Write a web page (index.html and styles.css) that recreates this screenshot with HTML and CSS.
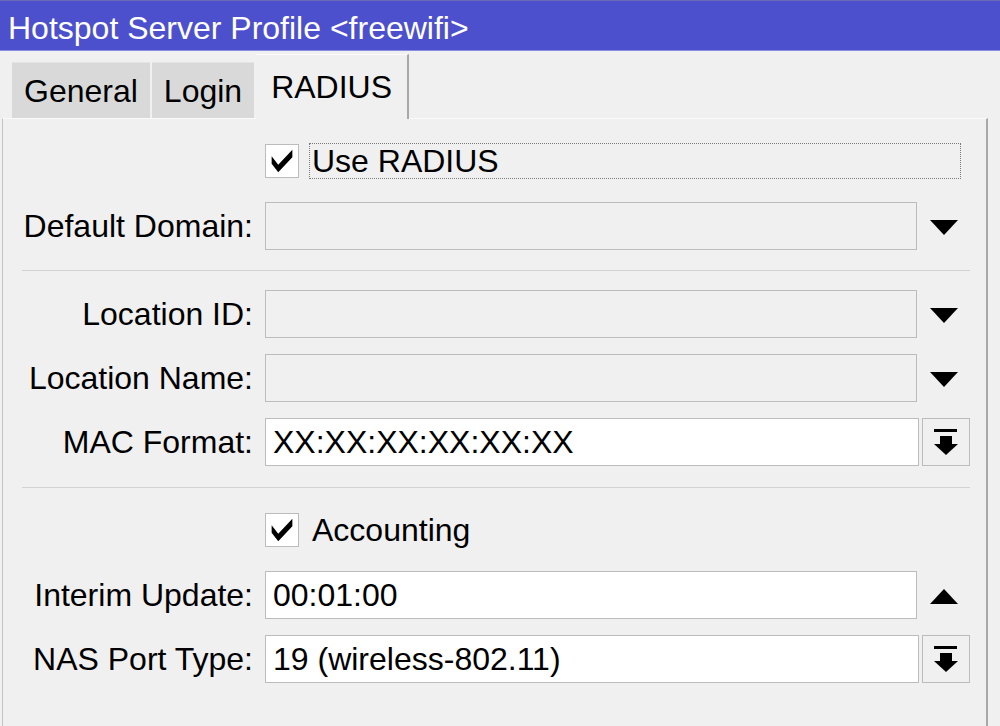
FILE: index.html
```html
<!DOCTYPE html>
<html>
<head>
<meta charset="utf-8">
<link rel="stylesheet" href="styles.css">
</head>
<body>
<div class="titlebar">Hotspot Server Profile &lt;freewifi&gt;</div>
<div class="tabs">
  <div class="tab">General</div>
  <div class="tab">Login</div>
  <div class="tab active">RADIUS</div>
</div>
<div class="panel">
  <div class="checkrow first">
    <span class="box"><svg width="34" height="34" viewBox="0 0 34 34"><polygon points="6,12 6,20 13,29 28,13 28,5 13,21" fill="#000"/></svg></span>
    <span class="checklabel focus">Use RADIUS</span>
  </div>

  <div class="row gap23">
    <label class="lbl">Default Domain:</label>
    <div class="field disabled"></div>
    <div class="ctl"><svg width="28" height="15" viewBox="0 0 28 15"><polygon points="0,0 28,0 14,15" fill="#000"/></svg></div>
  </div>

  <div class="sep top20"></div>

  <div class="row gap19">
    <label class="lbl">Location ID:</label>
    <div class="field disabled"></div>
    <div class="ctl"><svg width="28" height="15" viewBox="0 0 28 15"><polygon points="0,0 28,0 14,15" fill="#000"/></svg></div>
  </div>

  <div class="row">
    <label class="lbl">Location Name:</label>
    <div class="field disabled"></div>
    <div class="ctl"><svg width="28" height="15" viewBox="0 0 28 15"><polygon points="0,0 28,0 14,15" fill="#000"/></svg></div>
  </div>

  <div class="row">
    <label class="lbl">MAC Format:</label>
    <div class="field wide">XX:XX:XX:XX:XX:XX</div>
    <div class="btn"><svg width="46" height="46" viewBox="0 0 46 46"><rect x="11" y="10" width="23" height="3" fill="#000"/><rect x="17" y="17" width="12" height="8" fill="#000"/><polygon points="11,25 35,25 23,36" fill="#000"/></svg></div>
  </div>

  <div class="sep top21"></div>

  <div class="checkrow gap25">
    <span class="box"><svg width="34" height="34" viewBox="0 0 34 34"><polygon points="6,12 6,20 13,29 28,13 28,5 13,21" fill="#000"/></svg></span>
    <span class="checklabel">Accounting</span>
  </div>

  <div class="row gap23">
    <label class="lbl">Interim Update:</label>
    <div class="field">00:01:00</div>
    <div class="ctl"><svg width="28" height="15" viewBox="0 0 28 15"><polygon points="0,15 28,15 14,0" fill="#000"/></svg></div>
  </div>

  <div class="row">
    <label class="lbl">NAS Port Type:</label>
    <div class="field wide">19 (wireless-802.11)</div>
    <div class="btn"><svg width="46" height="46" viewBox="0 0 46 46"><rect x="11" y="10" width="23" height="3" fill="#000"/><rect x="17" y="17" width="12" height="8" fill="#000"/><polygon points="11,25 35,25 23,36" fill="#000"/></svg></div>
  </div>
</div>
</body>
</html>
```
FILE: styles.css
```css
html, body {
  margin: 0;
  padding: 0;
  height: 100%;
  overflow: hidden;
}
body {
  background: #f0f0f0;
  font-family: "Liberation Sans", Arial, sans-serif;
  font-size: 32px;
  color: #000;
}
.titlebar {
  height: 51px;
  box-sizing: border-box;
  border-top: 1px solid #6a6ab4;
  border-bottom: 1px solid #8a8ce4;
  background: #4d50cc;
  color: #fff;
  padding-left: 8px;
  padding-top: 4px;
  line-height: 46px;
}
.tabs {
  display: flex;
  align-items: flex-end;
  padding-left: 12px;
  margin-top: 2px;
  height: 65px;
}
.tab {
  height: 56px;
  box-sizing: border-box;
  background: #d9d9d9;
  padding: 0 12px 0 12px;
  line-height: 56px;
  margin-right: 2px;
  border-top: 1px solid #e4e4e4;
}
.tab.active {
  height: 65px;
  background: #f0f0f0;
  padding: 0 15px 0 15px;
  line-height: 64px;
  margin-right: 0;
  border-top: 1px solid #fafafa;
  border-right: 2px solid #a8a8a8;
  position: relative;
  top: 1px;
}
.panel {
  margin-left: 2px;
  width: 986px;
  box-sizing: border-box;
  height: 620px;
  border-top: 1px solid #fbfbfb;
  border-left: 1px solid #c4c4c4;
  border-right: 2px solid #a8a8a8;
  padding-top: 24px;
  padding-left: 1px;
}
.row {
  display: flex;
  align-items: center;
  height: 48px;
  margin-top: 16px;
}
.row.gap23 { margin-top: 23px; }
.row.gap19 { margin-top: 19px; }
.lbl {
  width: 249px;
  text-align: right;
  flex: none;
  margin-right: 12px;
}
.field {
  width: 652px;
  height: 48px;
  box-sizing: border-box;
  border: 1px solid #bcbcbc;
  background: #fff;
  padding-left: 7px;
  line-height: 46px;
  flex: none;
  white-space: nowrap;
}
.field.disabled {
  background: #f0f0f0;
}
.field.wide {
  width: 654px;
}
.ctl {
  width: 53px;
  display: flex;
  justify-content: center;
  align-items: center;
  padding-top: 2px;
  flex: none;
}
.ctl svg { display: block; }
.btn {
  margin-left: 3px;
  width: 48px;
  height: 48px;
  box-sizing: border-box;
  border: 1px solid #bcbcbc;
  background: #f0f0f0;
  flex: none;
}
.btn svg { display: block; }
.sep {
  height: 1px;
  background: #d2d2d2;
  margin-left: 18px;
  width: 948px;
}
.sep.top20 { margin-top: 20px; }
.sep.top21 { margin-top: 21px; }
.checkrow {
  display: flex;
  align-items: center;
  height: 36px;
  margin-left: 261px;
}
.checkrow.gap25 { margin-top: 24px; }
.box {
  width: 34px;
  height: 34px;
  box-sizing: border-box;
  border: 1px solid #bcbcbc;
  background: #fff;
  display: flex;
  align-items: center;
  justify-content: center;
  flex: none;
}
.box svg { display: block; }
.checklabel {
  margin-left: 10px;
  width: 652px;
  height: 36px;
  box-sizing: border-box;
  border: 1px dotted transparent;
  padding-left: 2px;
  line-height: 34px;
}
.checklabel.focus {
  border-color: #7a7a7a;
}
```
